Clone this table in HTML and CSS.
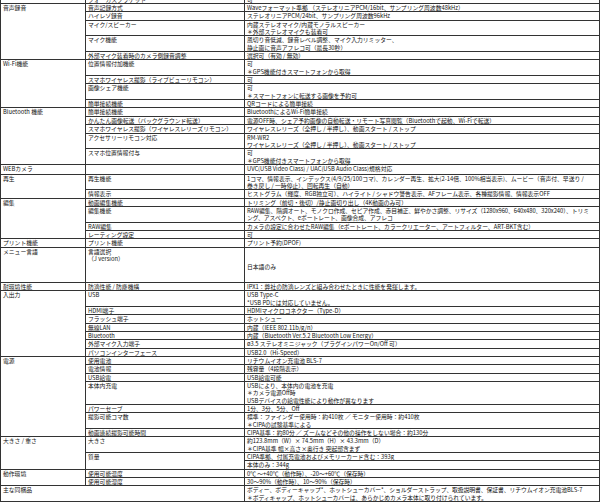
FILE: index.html
```html
<!DOCTYPE html>
<html lang="ja">
<head>
<meta charset="utf-8">
<link rel="stylesheet" href="styles.css">
</head>
<body>
<table class="spec">
<colgroup><col class="c1"><col class="c2"><col class="c3"></colgroup>
<tbody>
<tr class="cut"><td></td><td>フォーカスブラケット</td><td>可</td></tr>

<tr class="grp"><td rowspan="5">音声録音</td><td>音声記録方式</td><td>Waveフォーマット準拠 （ステレオリニアPCM/16bit、サンプリング周波数48kHz）</td></tr>
<tr><td>ハイレゾ録音</td><td>ステレオリニアPCM/24bit、サンプリング周波数96kHz</td></tr>
<tr><td>マイク/スピーカー</td><td>内蔵ステレオマイク/内蔵モノラルスピーカー<br>＊外部ステレオマイクも装着可</td></tr>
<tr><td>マイク機能</td><td>風切り音低減、録音レベル調整、マイク入力リミッター、<br>静止画に音声アフレコ可（最長30秒）</td></tr>
<tr><td>外部マイク装着時のカメラ側録音調整</td><td>選択可（有効 / 無効）</td></tr>

<tr class="grp"><td rowspan="4">Wi-Fi機能</td><td>位置情報付加機能</td><td>可<br>＊GPS機能付きスマートフォンから取得</td></tr>
<tr><td>スマホワイヤレス撮影（ライブビューリモコン）</td><td>可</td></tr>
<tr><td>画像シェア機能</td><td>可<br>＊スマートフォンに転送する画像を予約可</td></tr>
<tr><td>簡単接続機能</td><td>QRコードによる簡単接続</td></tr>

<tr class="grp"><td rowspan="5">Bluetooth 機能</td><td>簡単接続機能</td><td>BluetoothによるWi-Fi簡単接続</td></tr>
<tr><td>かんたん画像転送（バックグラウンド転送）</td><td>電源OFF時、シェア予約画像の自動転送・リモート写真閲覧（Bluetoothで起動、Wi-Fiで転送）</td></tr>
<tr><td>スマホワイヤレス撮影（ワイヤレスレリーズリモコン）</td><td>ワイヤレスレリーズ（全押し / 半押し）、動画スタート / ストップ</td></tr>
<tr><td>アクセサリーリモコン対応</td><td>RM-WR2<br>ワイヤレスレリーズ（全押し / 半押し）、動画スタート / ストップ</td></tr>
<tr><td>スマホ位置情報付与</td><td>可<br>＊GPS機能付きスマートフォンから取得</td></tr>

<tr class="grp web"><td>WEBカメラ</td><td></td><td>UVC(USB Video Class) / UAC(USB Audio Class)規格対応</td></tr>

<tr class="grp"><td rowspan="2">再生</td><td>再生機能</td><td>1コマ、情報表示、インデックス(4/9/25/100コマ)、カレンダー再生、拡大(2-14倍、100%相当表示)、ムービー（音声付、早送り /<br>巻き戻し / 一時停止）、回転再生（自動）</td></tr>
<tr><td>情報表示</td><td>ヒストグラム（輝度、RGB独立可）、ハイライト / シャドウ警告表示、AFフレーム表示、各種撮影情報、情報表示OFF</td></tr>

<tr class="grp"><td rowspan="4">編集</td><td>動画編集機能</td><td>トリミング（前切・後切）/静止画切り出し（4K動画のみ可）</td></tr>
<tr><td>編集機能</td><td class="nw">RAW編集、階調オート、モノクロ作成、セピア作成、赤目補正、鮮やかさ調整、リサイズ（1280x960、640x480、320x240）、トリミ<br>ング、アスペクト、eポートレート、画像合成、アフレコ</td></tr>
<tr><td>RAW編集</td><td>カメラの設定に合わせたRAW編集（eポートレート、カラークリエーター、アートフィルター、ART-BKT含む）</td></tr>
<tr><td>レーティング設定</td><td>可</td></tr>

<tr class="grp"><td>プリント機能</td><td>プリント機能</td><td>プリント予約(DPOF)</td></tr>

<tr class="grp tall"><td>メニュー言語</td><td>言語選択<br>（J version）</td><td class="mid">日本語のみ</td></tr>

<tr class="grp"><td>耐環境性能</td><td>防滴性能 / 防塵機構</td><td>IPX1：弊社の防滴レンズと組み合わせたときに性能を発揮します。</td></tr>

<tr class="grp"><td rowspan="7">入出力</td><td>USB</td><td>USB Type-C<br>*USB PDには対応していません。</td></tr>
<tr><td>HDMI端子</td><td>HDMIマイクロコネクター（Type-D）</td></tr>
<tr><td>フラッシュ端子</td><td>ホットシュー</td></tr>
<tr><td>無線LAN</td><td>内蔵（IEEE 802.11b/g/n）</td></tr>
<tr><td>Bluetooth</td><td>内蔵（Bluetooth Ver.5.2 Bluetooth Low Energy）</td></tr>
<tr><td>外部マイク入力端子</td><td>ø3.5 ステレオミニジャック（プラグインパワーOn/Off 可）</td></tr>
<tr><td>パソコンインターフェース</td><td>USB2.0（Hi-Speed）</td></tr>

<tr class="grp"><td rowspan="7">電源</td><td>使用電池</td><td>リチウムイオン充電池 BLS-7</td></tr>
<tr><td>電池情報</td><td>残容量（4段階表示）</td></tr>
<tr><td>USB給電</td><td>USB給電可能</td></tr>
<tr><td>本体内充電</td><td>USBにより、本体内の電池を充電<br>＊カメラ電源Off時<br>USBデバイスの給電性能により動作が異なります</td></tr>
<tr><td>パワーセーブ</td><td>1分、3分、5分、Off</td></tr>
<tr><td>撮影可能コマ数</td><td>標準：ファインダー使用時：約410枚 ／ モニター使用時：約410枚<br>＊CIPAの試験基準による</td></tr>
<tr><td>動画連続撮影可能時間</td><td>CIPA基準：約80分 ／ ズームなどその他の操作をしない場合：約130分</td></tr>

<tr class="grp"><td rowspan="3">大きさ / 重さ</td><td>大きさ</td><td>約123.8mm（W）× 74.5mm（H）× 43.3mm（D）<br>＊CIPA基準 幅×高さ×奥行き 突起部含まず</td></tr>
<tr><td rowspan="2">質量</td><td>CIPA準拠、付属充電池およびメモリーカード含む：393g</td></tr>
<tr><td>本体のみ：344g</td></tr>

<tr class="grp"><td rowspan="2">動作環境</td><td>使用可能温度</td><td>0℃ ～+40℃（動作時）、-20～+60℃（保存時）</td></tr>
<tr><td>使用可能湿度</td><td>30～90%（動作時）、10～90%（保存時）</td></tr>

<tr class="grp"><td colspan="2">主な同梱品</td><td class="nw">ボディー、ボディーキャップ*、ホットシューカバー*、ショルダーストラップ、取扱説明書、保証書、リチウムイオン充電池BLS-7<br>＊ボディキャップ、ホットシューカバーは、あらかじめカメラ本体に取り付けられています。</td></tr>
</tbody>
</table>
</body>
</html>
```

FILE: styles.css
```css
html, body {
  margin: 0;
  padding: 0;
  background: #ffffff;
}

.spec {
  width: 599px;
  margin-top: -5.35px;
  table-layout: fixed;
  border-collapse: collapse;
  font-family: "Noto Sans CJK JP", "Liberation Sans", sans-serif;
  font-size: 5.8px;
  line-height: 7.35px;
  color: #111111;
}

.c1 { width: 85px; }
.c2 { width: 159px; }
.c3 { width: 355px; }

.spec td {
  border: 1px solid #333333;
  padding: 0 0 0 2px;
  vertical-align: top;
  white-space: normal;
  overflow: hidden;
}

.spec td.nw {
  white-space: nowrap;
  letter-spacing: -0.05px;
}

.spec .grp td {
  border-top-color: #4a4a4a;
}

.spec .web td {
  padding-bottom: 1.5px;
}

.spec .tall td {
  height: 31px;
}

.spec td.mid {
  vertical-align: middle;
  padding-top: 3px;
}
```
